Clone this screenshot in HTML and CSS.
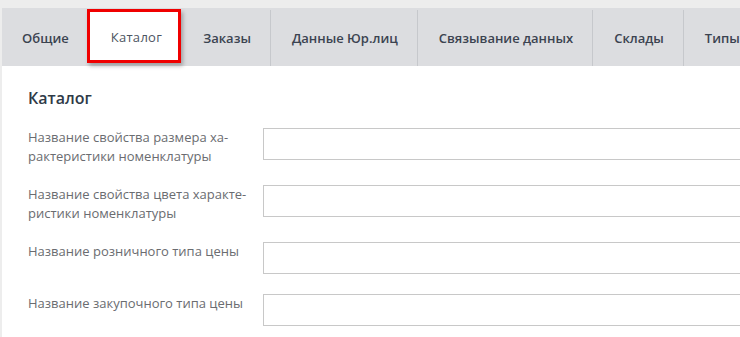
FILE: index.html
```html
<!DOCTYPE html>
<html lang="ru">
<head>
<meta charset="utf-8">
<link rel="stylesheet" href="styles.css">
</head>
<body>
<div class="page">
  <nav class="tabs">
    <div class="tab">Общие</div>
    <div class="tab active">Каталог</div>
    <div class="tab after-active">Заказы</div>
    <div class="tab sep">Данные Юр.лиц</div>
    <div class="tab sep">Связывание данных</div>
    <div class="tab sep">Склады</div>
    <div class="tab sep">Типы цен</div>
  </nav>
  <main class="content">
    <h2 class="title">Каталог</h2>
    <div class="row">
      <label class="label">Название свойства размера ха-<br>рактеристики номенклатуры</label>
      <input class="field" type="text">
    </div>
    <div class="row">
      <label class="label">Название свойства цвета характе-<br>ристики номенклатуры</label>
      <input class="field" type="text">
    </div>
    <div class="row">
      <label class="label">Название розничного типа цены</label>
      <input class="field" type="text">
    </div>
    <div class="row">
      <label class="label">Название закупочного типа цены</label>
      <input class="field" type="text">
    </div>
  </main>
</div>
</body>
</html>
```

FILE: styles.css
```css
html, body {
  margin: 0;
  padding: 0;
  background: #ededed;
  overflow: hidden;
  font-family: "Open Sans", "Noto Sans", sans-serif;
}

.page {
  width: 1000px;
  margin: 8px 0 0 2px;
  height: 329px;
  background: #ffffff;
}

.tabs {
  display: flex;
  height: 58px;
  background: #dcdde0;
  white-space: nowrap;
}

.tab {
  display: flex;
  align-items: center;
  padding: 2px 20px 0 21px;
  font-size: 13px;
  font-weight: 600;
  color: #3b4350;
  position: relative;
}

.tab:first-child {
  padding-left: 20px;
  padding-right: 18px;
}

.tab.after-active {
  padding-left: 22px;
}

.tab.sep::before {
  content: "";
  position: absolute;
  left: -1px;
  top: 2px;
  bottom: 0;
  width: 1px;
  background: #c6c8cc;
}

.tab.active {
  align-self: flex-start;
  margin-top: 1px;
  height: 54px;
  box-sizing: border-box;
  padding: 2px 16px 0 21px;
  background: #ffffff;
  border: 3px solid #f00000;
  box-shadow: 2px 3px 4px rgba(0, 0, 0, 0.28);
  color: #4d5562;
  font-weight: 400;
  letter-spacing: 0.3px;
  z-index: 1;
}

.content {
  padding: 21px 0 0 26px;
}

.title {
  margin: 0 0 19px;
  font-size: 16px;
  line-height: 22px;
  font-weight: 600;
  color: #2f3a47;
}

.row {
  display: flex;
  align-items: flex-start;
  min-height: 33px;
  margin-bottom: 19px;
}

.label {
  width: 235px;
  flex: none;
  font-size: 13px;
  line-height: 19px;
  color: #6a6c70;
}

.field {
  flex: 1;
  height: 32px;
  box-sizing: border-box;
  margin: 0;
  border: 1px solid #c8c8c8;
  background: #ffffff;
  outline: none;
}
```
